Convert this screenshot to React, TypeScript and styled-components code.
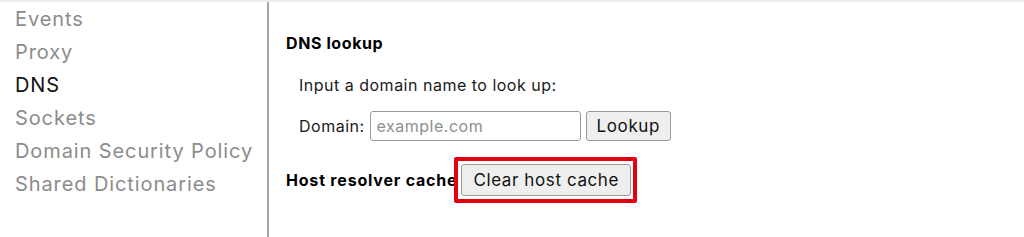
import React from 'react';
import styled, {createGlobalStyle} from 'styled-components';

const GlobalStyle = createGlobalStyle`
  html, body {
    margin: 0;
    padding: 0;
    background: #fff;
  }
  body {
    font-family: Inter, "Liberation Sans", Arial, sans-serif;
    color: #000;
  }
`

const Page = styled.div`
  width: 1024px;
  height: 237px;
  border-top: 2px solid #ececec;
  box-sizing: border-box;
  display: flex;
  overflow: hidden;
`

const Sidebar = styled.ul`
  list-style: none;
  margin: 0;
  padding: 1px 0 0 15px;
  width: 252px;
  border-right: 2px solid #a6a6a6;
`

const NavItem = styled.li<{ $active?: boolean }>`
  font-size: 20px;
  line-height: 33px;
  letter-spacing: 0.9px;
  color: ${p => p.$active ? '#111' : '#8c8c8c'};
  white-space: nowrap;
`

const Content = styled.div`
  flex: 1;
  padding: 30px 0 0 17px;
  font-size: 16px;
  letter-spacing: 0.5px;
`

const SectionTitle = styled.h4`
  margin: 0;
  font-size: 16px;
  font-weight: bold;
  line-height: 22px;
  letter-spacing: 0.6px;
`

const Block = styled.div`
  padding-left: 13px;
  margin-top: 20px;
`

const Line = styled.div`
  line-height: 22px;
  color: #1a1a1a;
`

const FormRow = styled.div`
  display: flex;
  align-items: center;
  gap: 5px;
  margin-top: 15px;
  color: #1a1a1a;
`

const TextInput = styled.input`
  width: 211px;
  height: 30px;
  box-sizing: border-box;
  border: 1px solid #9a9a9a;
  border-radius: 3px;
  padding: 0 6px;
  font-family: inherit;
  font-size: 16px;
  letter-spacing: 0.5px;
  outline: none;
  &::placeholder {
    color: #8e8e8e;
  }
`

const Button = styled.button<{ $tall?: boolean }>`
  height: ${p => p.$tall ? 32 : 30}px;
  box-sizing: border-box;
  padding: 0 ${p => p.$tall ? 11 : 10}px;
  border: 1px solid #9a9a9a;
  border-radius: 3px;
  background: #efefef;
  font-family: inherit;
  font-size: 17px;
  letter-spacing: 0.6px;
  color: #111;
`

const HostRow = styled.div`
  display: flex;
  align-items: center;
  margin-top: 16px;
`

const HostLabel = styled.span`
  font-size: 16px;
  font-weight: bold;
  letter-spacing: 0.8px;
  white-space: nowrap;
`

const Highlight = styled.div`
  position: relative;
  margin-left: -3px;
  border: 4px solid #e3000f;
  border-radius: 2px;
  padding: 3px 2px 3px 3px;
  display: flex;
`

export default function App() {
  return (
    <>
      <GlobalStyle/>
      <Page>
        <Sidebar>
          <NavItem>Events</NavItem>
          <NavItem>Proxy</NavItem>
          <NavItem $active>DNS</NavItem>
          <NavItem>Sockets</NavItem>
          <NavItem>Domain Security Policy</NavItem>
          <NavItem>Shared Dictionaries</NavItem>
        </Sidebar>
        <Content>
          <SectionTitle>DNS lookup</SectionTitle>
          <Block>
            <Line>Input a domain name to look up:</Line>
            <FormRow>
              <span>Domain:</span>
              <TextInput placeholder="example.com"/>
              <Button>Lookup</Button>
            </FormRow>
          </Block>
          <HostRow>
            <HostLabel>Host resolver cache</HostLabel>
            <Highlight>
              <Button $tall>Clear host cache</Button>
            </Highlight>
          </HostRow>
        </Content>
      </Page>
    </>
  );
}
